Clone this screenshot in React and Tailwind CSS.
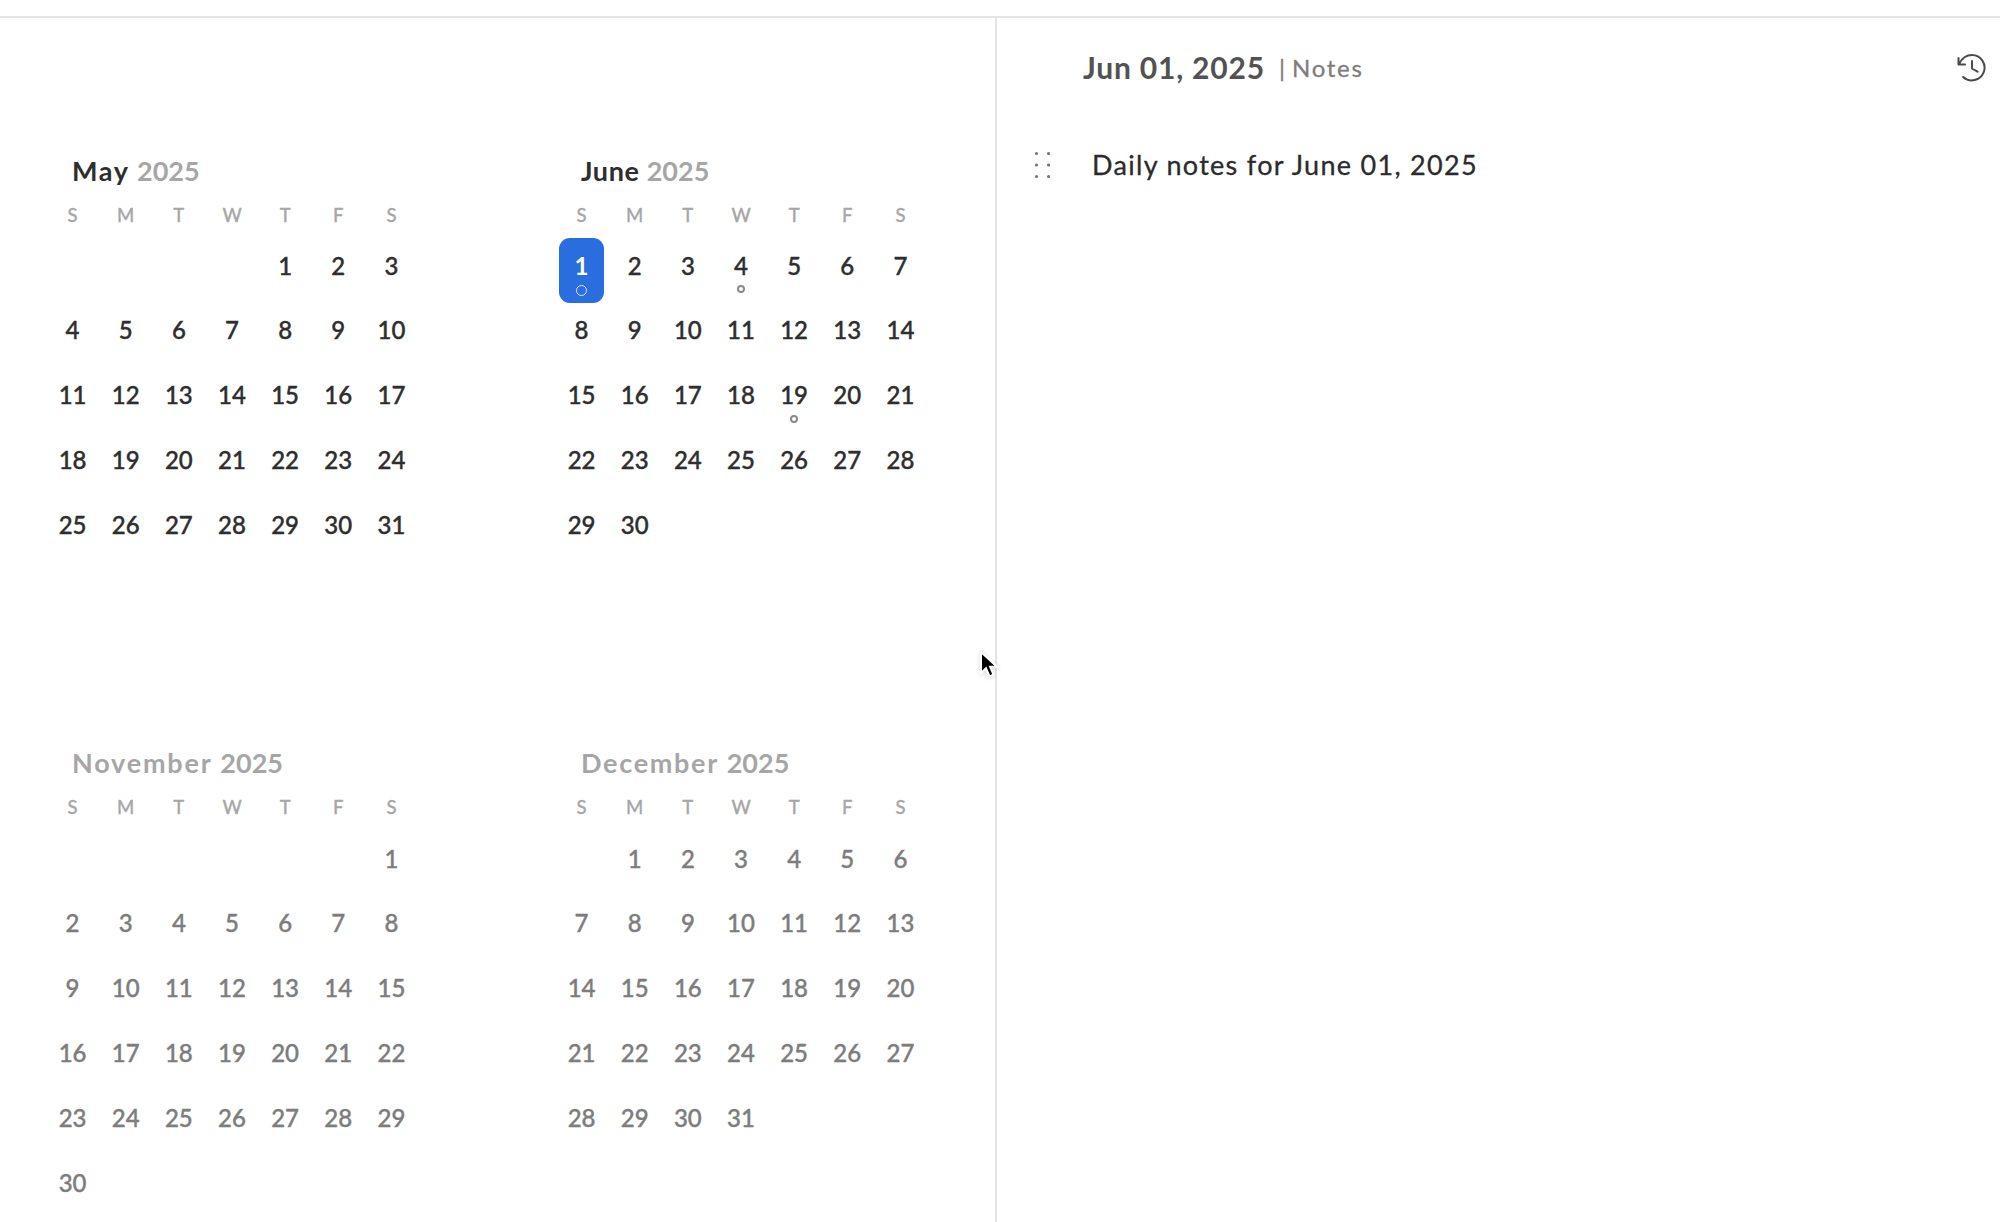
const WEEKDAYS = ["S", "M", "T", "W", "T", "F", "S"];

function Day({ n, selected, marked, muted }) {
  if (selected) {
    return (
      <div className="flex h-[65px] w-[45px] flex-col items-center justify-self-center rounded-[11px] bg-[#2a6ddf] pt-[12.5px] text-white">
        <span className="h-[30px] text-[24px] font-bold leading-[30px]">{n}</span>
        <span className="mt-[4.5px] size-[11px] rounded-full border border-white/80" />
      </div>
    );
  }
  return (
    <div className={`flex h-[65px] flex-col items-center pt-[12.6px] ${muted ? "text-[#7d7d7d]" : "text-[#2e2e2e]"}`}>
      <span className="h-[30px] text-[24px] font-medium leading-[30px] [-webkit-text-stroke:0.4px_currentColor]">{n}</span>
      {marked && <span className="mt-[4.4px] size-[8px] rounded-full border-2 border-[#8a8a8a]" />}
    </div>
  );
}

function Month({ name, tracking, days, start, muted, selected, marked = [] }) {
  return (
    <section className="w-[372px]">
      <h2 className={`whitespace-pre pl-[26px] text-[27px] font-bold leading-[32px] ${muted ? "text-[#a6a6a6]" : "text-[#2e2e2e]"}`}>
        <span className={tracking}>{name + " "}</span>
        <span className="text-[#a6a6a6]">2025</span>
      </h2>
      <div className="mt-[16px] grid grid-cols-7 text-center text-[18.5px] font-medium leading-[24px] text-[#a6a6a6] [-webkit-text-stroke:0.3px_currentColor]">
        {WEEKDAYS.map((d, i) => <span key={i}>{d}</span>)}
      </div>
      <div className={`grid auto-rows-[64.9px] grid-cols-7 ${muted ? "mt-[12px]" : "mt-[11px]"}`}>
        {Array.from({ length: start }, (_, i) => <span key={`b${i}`} />)}
        {Array.from({ length: days }, (_, i) => (
          <Day key={i} n={i + 1} muted={muted} selected={selected === i + 1} marked={marked.includes(i + 1)} />
        ))}
      </div>
    </section>
  );
}

export default function App() {
  return (
    <div className="relative flex h-[1222px] w-[2000px] flex-col overflow-hidden bg-white font-['Lato','Open_Sans',sans-serif]">
      <div className="h-[18px] shrink-0 border-b-2 border-[#e3e3e9]" />
      <div className="flex min-h-0 flex-1">
        <main className="w-[997px] shrink-0 border-r-2 border-[#e3e3e9] pl-[46px] pt-[137px]">
          <div className="grid grid-cols-[372px_372px] grid-rows-[592px_592px] gap-x-[137px]">
            <Month name="May" tracking="tracking-[1.6px]" days={31} start={4} />
            <Month name="June" tracking="tracking-[0.6px]" days={30} start={0} selected={1} marked={[4, 19]} />
            <Month name="November" tracking="tracking-[1.8px]" days={30} start={6} muted />
            <Month name="December" tracking="tracking-[1.7px]" days={31} start={1} muted />
          </div>
        </main>
        <aside className="flex-1">
          <header className="flex h-[100px] items-center pl-[86px] pr-[14px]">
            <h1 className="-mt-[2px] w-[196px] whitespace-nowrap text-[30px] font-bold leading-[40px] tracking-[0.8px] text-[#525252]">Jun 01, 2025</h1>
            <span className="-mt-px flex gap-[7px] text-[24px] leading-[40px] text-[#7d7d7d] [-webkit-text-stroke:0.3px_currentColor]">
              <span>|</span>
              <span className="tracking-[1.7px]">Notes</span>
            </span>
            <svg className="ml-auto" width="30" height="30" viewBox="0 0 30 30" fill="none" stroke="#4a4a4a" strokeWidth="2" strokeLinecap="round" strokeLinejoin="round">
              <path d="M2.5 5v6.5H9M3 11C6 5 10 2 16 2a12.7 12.7 0 1 1-8.8 22M16 8v7.5l5.5 3.2" />
            </svg>
          </header>
          <div className="flex h-[94px] items-center pl-[37px]">
            <svg width="16" height="28" viewBox="0 0 16 28" fill="#777">
              {[2.5, 14, 25.5].map((y) => [3, 15].map((x) => <circle key={`${x}-${y}`} cx={x - 0.5} cy={y} r="1.6" />))}
            </svg>
            <p className="ml-[42px] whitespace-nowrap text-[27px] leading-[36px] tracking-[1.3px] text-[#2b2b2b] [-webkit-text-stroke:0.3px_currentColor]">Daily notes for June 01, 2025</p>
          </div>
        </aside>
      </div>
      <svg className="absolute left-[978px] top-[649px] drop-shadow-sm" width="22" height="32" viewBox="0 0 22 32">
        <path d="M3 3v21l5-4.7 3.5 8 4-1.7-3.4-7.8H19Z" fill="#000" stroke="#fff" strokeWidth="2" />
      </svg>
    </div>
  );
}
